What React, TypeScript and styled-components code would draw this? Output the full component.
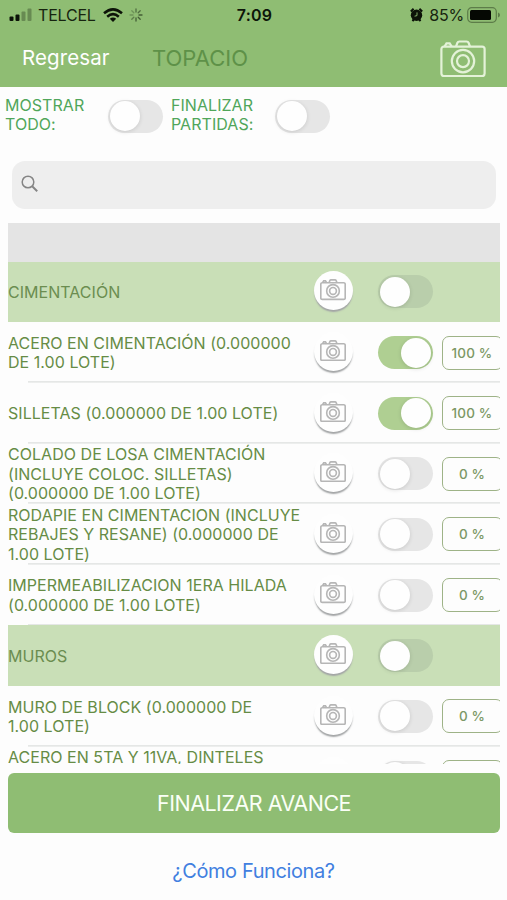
import React from "react";
import styled, { createGlobalStyle } from "styled-components";

const GlobalStyle = createGlobalStyle`
  * { box-sizing: border-box; }
  body { margin: 0; background: #fdfdfd; font-family: Inter, "Liberation Sans", sans-serif; }
`;

const Screen = styled.div`
  width: 507px;
  height: 900px;
  overflow: hidden;
  background: #fdfdfd;
  display: flex;
  flex-direction: column;
`;

const Header = styled.header`
  height: 87px;
  flex: none;
  background: #8fbd73;
`;

const StatusBar = styled.div`
  height: 30px;
  display: grid;
  grid-template-columns: 1fr auto 1fr;
  align-items: center;
  padding: 0 7px 0 9px;
  font-size: 16px;
  color: #17240f;
`;

const StatusGroup = styled.div<{ $end?: boolean }>`
  display: flex;
  align-items: center;
  justify-content: ${(p) => (p.$end ? "flex-end" : "flex-start")};
`;

const Carrier = styled.span`
  margin: 0 7px 0 6px;
  letter-spacing: -0.2px;
`;

const Clock = styled.span`
  font-weight: 600;
  letter-spacing: 0.2px;
  color: #0d1509;
`;

const BatteryLevel = styled.span`
  margin: 0 3px 0 6px;
  letter-spacing: -0.2px;
`;

const NavBar = styled.nav`
  height: 57px;
  display: flex;
  align-items: center;
  padding: 0 21px 0 22px;
`;

const BackLink = styled.a`
  width: 130px;
  padding-bottom: 2px;
  font-size: 20.5px;
  letter-spacing: 0.1px;
  color: #fff;
`;

const Title = styled.h1`
  flex: 1;
  margin: 0;
  padding-bottom: 2px;
  font-size: 22px;
  font-weight: 400;
  color: #5e9148;
`;

const Filters = styled.div`
  height: 56px;
  flex: none;
  margin-top: 1px;
  display: flex;
  align-items: center;
  padding-left: 5px;
`;

const FilterLabel = styled.span<{ $width: number }>`
  width: ${(p) => p.$width}px;
  padding-bottom: 3px;
  font-size: 16px;
  line-height: 19px;
  letter-spacing: 0.05px;
  white-space: pre;
  color: #50a65a;
`;

const FilterToggle = styled.div`
  margin-right: 8px;
`;

const SearchBox = styled.div`
  height: 48px;
  flex: none;
  margin: 17px 11px 0 12px;
  padding: 0 0 2px 9px;
  border-radius: 13px;
  background: #eeeeee;
  display: flex;
  align-items: center;
`;

const List = styled.main`
  width: 492px;
  height: 541px;
  flex: none;
  margin: 14px 0 0 8px;
  overflow: hidden;
`;

const ListTop = styled.div`
  height: 38.6px;
  background: #e4e4e4;
`;

const Row = styled.div<{ $section?: boolean }>`
  height: 60.65px;
  display: grid;
  grid-template-columns: 305px 65px 63.5px 61px;
  align-items: center;
  color: ${(p) => (p.$section ? "#6b8d50" : "#668c45")};
  background: ${(p) =>
    p.$section
      ? "#c9dfb7"
      : "linear-gradient(#e5e7e6, #e5e7e6) 20px 100% / 472px 1.7px no-repeat #fdfdfd"};
`;

const RowLabel = styled.span<{ $top?: boolean }>`
  align-self: ${(p) => (p.$top ? "start" : "center")};
  padding-top: 1px;
  font-size: 16px;
  line-height: 19.3px;
  letter-spacing: 0.04px;
  white-space: pre;
`;

const PhotoButton = styled.button`
  width: 39px;
  height: 39px;
  margin: -2px 0 0 0.5px;
  padding: 0 0 2px;
  border: 0;
  border-radius: 50%;
  background: #fefefe;
  box-shadow: 0 2.5px 1.5px -0.5px #a3a5a6;
  display: grid;
  place-items: center;
`;

const Track = styled.span<{ $on?: boolean; $section?: boolean }>`
  width: 55px;
  height: 33px;
  flex: none;
  padding: 1.5px 2px;
  border-radius: 17px;
  display: flex;
  justify-content: ${(p) => (p.$on ? "flex-end" : "flex-start")};
  background: ${(p) => (p.$on ? "#afcf92" : p.$section ? "#b9ceab" : "#e6e6e6")};
`;

const Knob = styled.span`
  width: 30px;
  height: 30px;
  border-radius: 50%;
  background: #fefefe;
  box-shadow: 0 1px 4px rgba(0, 0, 0, 0.13);
`;

const Percent = styled.span`
  height: 34px;
  border: 1.3px solid #9eb387;
  border-radius: 7px;
  display: flex;
  align-items: center;
  justify-content: center;
  font-size: 13.5px;
  letter-spacing: 0.15px;
  font-weight: 500;
  color: #7c9865;
`;

const FinishButton = styled.button`
  height: 60px;
  flex: none;
  margin: 8.5px 7px 0 8px;
  padding: 0;
  border: 0;
  border-radius: 6px;
  background: #8fbd73;
  color: #fafff6;
  font: 400 21.5px Inter, "Liberation Sans", sans-serif;
  letter-spacing: -0.5px;
`;

const HelpLink = styled.a`
  margin-top: 25px;
  text-align: center;
  font-size: 20px;
  line-height: 26px;
  letter-spacing: -0.4px;
  color: #417fe0;
`;

function CameraIcon({ width, color, stroke }: { width: number; color: string; stroke: number }) {
  return (
    <svg width={width} height={width * 0.82} viewBox="0 0 46 37.5" fill="none" stroke={color} strokeWidth={stroke}>
      <rect x="1.4" y="6.5" width="43.2" height="29.5" rx="2.5" />
      <path d="M4.5 6.5 6.5 3.3h3.2l2 3.2M16 6.5l1.3-3.6Q17.9 1.4 19.5 1.4h7q1.6 0 2.2 1.5L30 6.5" />
      <circle cx="23" cy="21" r="11.2" />
      <circle cx="23" cy="21" r="6" />
    </svg>
  );
}

function Toggle({ on, section }: { on?: boolean; section?: boolean }) {
  return (
    <Track $on={on} $section={section}>
      <Knob />
    </Track>
  );
}

const SignalIcon = () => (
  <svg width="23" height="14" viewBox="0 0 23 14" fill="#0c1308">
    <rect x="0.5" y="8.5" width="4" height="4.5" rx="1" />
    <rect x="6.5" y="6.5" width="4" height="6.5" rx="1" />
    <rect x="12.5" y="3.5" width="4" height="9.5" rx="1" opacity=".3" />
    <rect x="18.5" y="0.5" width="4" height="12.5" rx="1" opacity=".3" />
  </svg>
);

const WifiIcon = () => (
  <svg width="20" height="15" viewBox="0 0 20 15" fill="none" stroke="#0c1308" strokeWidth="2.5">
    <path d="M1 5.3Q10-2.6 19 5.3M4.2 8.7Q10 3.6 15.8 8.7" />
    <path d="M10 14 6.8 10.8Q10 8.2 13.2 10.8Z" fill="#0c1308" stroke="none" />
  </svg>
);

const SpinnerMark = styled.svg`
  margin-left: 6px;
`;

const SpinnerIcon = () => (
  <SpinnerMark width="14" height="14" viewBox="0 0 14 14" stroke="#3c5430" strokeWidth="1.3" strokeLinecap="round">
    <path d="M7 1v3M11.2 2.8 9.2 4.8" opacity=".75" />
    <path d="M13 7h-3M11.2 11.2 9.2 9.2M7 13v-3" opacity=".9" />
    <path d="M2.8 11.2l2-2" opacity=".6" />
    <path d="M1 7h3M2.8 2.8l2 2" opacity=".4" />
  </SpinnerMark>
);

const AlarmIcon = () => (
  <svg width="13" height="14" viewBox="0 0 13 14">
    <path d="M.8 3.5 3.6.8M12.2 3.5 9.4.8M2.5 13.2l1.5-2M10.5 13.2 9 11.2" stroke="#0c1308" strokeWidth="2" />
    <circle cx="6.5" cy="7.3" r="5.7" fill="#0c1308" />
    <path d="M7 4.4v3.2L4.6 8.2" fill="none" stroke="#8fbd73" strokeWidth=".9" />
  </svg>
);

const BatteryIcon = () => (
  <svg width="33" height="16" viewBox="0 0 33 16">
    <rect x=".7" y=".7" width="28.6" height="14.6" rx="4" fill="none" stroke="#5d7d49" strokeWidth="1.2" />
    <rect x="3" y="3" width="21" height="10" rx="1.5" fill="#050803" />
    <path d="M31 5.5q2 .8 2 2.5t-2 2.5z" fill="#5d7d49" />
  </svg>
);

const SearchIcon = () => (
  <svg width="18" height="18" viewBox="0 0 18 18" fill="none" stroke="#858585" strokeWidth="1.5">
    <circle cx="7" cy="7" r="5.8" />
    <path d="m11.2 11.2 5 5" strokeWidth="2" />
  </svg>
);

type Item = { label: string; section?: boolean; percent?: number; partial?: boolean };

const items: Item[] = [
  { label: "CIMENTACIÓN", section: true },
  { label: "ACERO EN CIMENTACIÓN (0.000000\nDE 1.00 LOTE)", percent: 100 },
  { label: "SILLETAS (0.000000 DE 1.00 LOTE)", percent: 100 },
  { label: "COLADO DE LOSA CIMENTACIÓN\n(INCLUYE COLOC. SILLETAS)\n(0.000000 DE 1.00 LOTE)", percent: 0 },
  { label: "RODAPIE EN CIMENTACION (INCLUYE\nREBAJES Y RESANE) (0.000000 DE\n1.00 LOTE)", percent: 0 },
  { label: "IMPERMEABILIZACION 1ERA HILADA\n(0.000000 DE 1.00 LOTE)", percent: 0 },
  { label: "MUROS", section: true },
  { label: "MURO DE BLOCK (0.000000 DE\n1.00 LOTE)", percent: 0 },
  { label: "ACERO EN 5TA Y 11VA, DINTELES", partial: true },
];

export default function App() {
  return (
    <>
      <GlobalStyle />
      <Screen>
        <Header>
          <StatusBar>
            <StatusGroup>
              <SignalIcon />
              <Carrier>TELCEL</Carrier>
              <WifiIcon />
              <SpinnerIcon />
            </StatusGroup>
            <Clock>7:09</Clock>
            <StatusGroup $end>
              <AlarmIcon />
              <BatteryLevel>85%</BatteryLevel>
              <BatteryIcon />
            </StatusGroup>
          </StatusBar>
          <NavBar>
            <BackLink>Regresar</BackLink>
            <Title>TOPACIO</Title>
            <CameraIcon width={46} color="#e4f2d8" stroke={2.2} />
          </NavBar>
        </Header>
        <Filters>
          <FilterLabel $width={103}>{"MOSTRAR\nTODO:"}</FilterLabel>
          <FilterToggle>
            <Toggle />
          </FilterToggle>
          <FilterLabel $width={103.5}>{"FINALIZAR\nPARTIDAS:"}</FilterLabel>
          <Toggle />
        </Filters>
        <SearchBox>
          <SearchIcon />
        </SearchBox>
        <List>
          <ListTop />
          {items.map((item) => (
            <Row key={item.label} $section={item.section}>
              <RowLabel $top={item.partial}>{item.label}</RowLabel>
              <PhotoButton>
                <CameraIcon width={26} color="#b6b6b6" stroke={2.9} />
              </PhotoButton>
              <Toggle on={item.percent === 100} section={item.section} />
              {!item.section && <Percent>{!item.partial && `${item.percent} %`}</Percent>}
            </Row>
          ))}
        </List>
        <FinishButton>FINALIZAR AVANCE</FinishButton>
        <HelpLink>¿Cómo Funciona?</HelpLink>
      </Screen>
    </>
  );
}
